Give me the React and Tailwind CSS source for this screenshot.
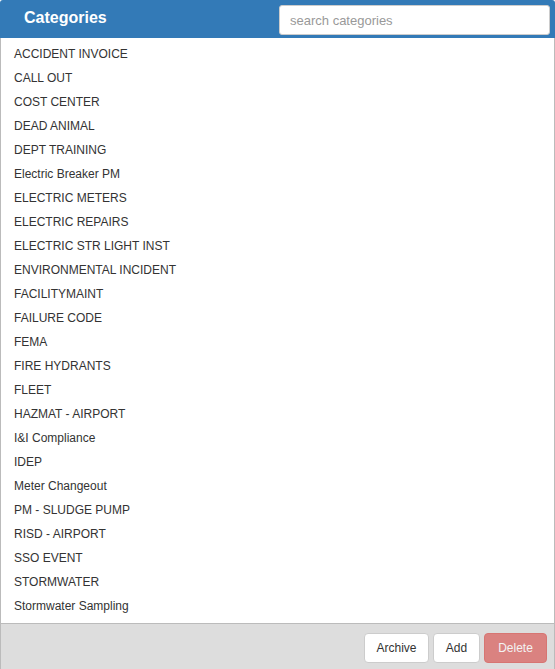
import React, { useState } from 'react';

const categories = [
  'ACCIDENT INVOICE',
  'CALL OUT',
  'COST CENTER',
  'DEAD ANIMAL',
  'DEPT TRAINING',
  'Electric Breaker PM',
  'ELECTRIC METERS',
  'ELECTRIC REPAIRS',
  'ELECTRIC STR LIGHT INST',
  'ENVIRONMENTAL INCIDENT',
  'FACILITYMAINT',
  'FAILURE CODE',
  'FEMA',
  'FIRE HYDRANTS',
  'FLEET',
  'HAZMAT - AIRPORT',
  'I&I Compliance',
  'IDEP',
  'Meter Changeout',
  'PM - SLUDGE PUMP',
  'RISD - AIRPORT',
  'SSO EVENT',
  'STORMWATER',
  'Stormwater Sampling',
];

export default function App() {
  const [query, setQuery] = useState('');

  return (
    <div className="w-[555px] h-[669px] overflow-hidden font-['Liberation_Sans',Arial,sans-serif] text-[#333]">
      <div className="flex flex-col h-[680px] border border-[#bbb] rounded-t-[4px]">
        {/* Header */}
        <div className="flex items-start justify-between h-[38px] bg-[#337ab7] rounded-t-[3px] -mx-px -mt-px pl-[24px] pr-[5px] pt-[5px] shrink-0">
          <h2 className="text-white font-bold text-[16px] leading-[26px]">Categories</h2>
          <input
            value={query}
            onChange={e => setQuery(e.target.value)}
            placeholder="search categories"
            className="w-[271px] h-[30px] bg-white border border-[#ccc] rounded-[3px] px-[10px] text-[13px] text-[#555] placeholder:text-[#999] outline-none"
          />
        </div>

        {/* List */}
        <ul className="flex-1 bg-white pt-[4px]">
          {categories
            .filter(c => c.toLowerCase().includes(query.toLowerCase()))
            .map(c => (
              <li key={c} className="h-[24px] leading-[24px] pl-[13px] text-[12px]">{c}</li>
            ))}
        </ul>

        {/* Footer */}
        <div className="h-[56px] shrink-0 bg-[#ddd] border-t border-[#bbb] flex justify-end items-start gap-[4px] pt-[9px] pr-[7px]">
          <button className="h-[30px] w-[65px] bg-white border border-[#ccc] rounded-[4px] text-[12px] text-[#333]">Archive</button>
          <button className="h-[30px] w-[47px] bg-white border border-[#ccc] rounded-[4px] text-[12px] text-[#333]">Add</button>
          <button disabled className="h-[30px] w-[63px] bg-[#d9534f] opacity-65 border border-[#d43f3a] rounded-[4px] text-[12px] text-white">Delete</button>
        </div>
      </div>
    </div>
  );
}
